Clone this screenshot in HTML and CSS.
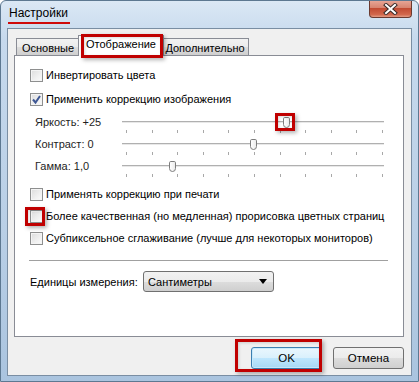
FILE: index.html
```html
<!DOCTYPE html>
<html lang="ru">
<head>
  <meta charset="UTF-8" />
  <title>Настройки</title>
  <link rel="stylesheet" href="styles.css">
</head>
<body>
  <div class="window">
    <!-- Title bar -->
    <div class="titlebar">
      <span class="title marked-title">Настройки</span>
      <span class="close">
        <svg width="17" height="12" viewBox="0 0 17 12">
          <path d="M4 2 L13 10 M13 2 L4 10" stroke="#3a2a28" stroke-width="4" stroke-linecap="square" fill="none"/>
          <path d="M4 2 L13 10 M13 2 L4 10" stroke="#ffffff" stroke-width="2" stroke-linecap="square" fill="none"/>
        </svg>
      </span>
    </div>

    <div class="client">
      <div class="tabs">
        <div class="tab tab-main">Основные</div>
        <div class="tab active marked-tab">Отображение</div>
        <div class="tab tab-extra">Дополнительно</div>
      </div>

      <div class="panel">
        <label class="check"><span class="box"></span>Инвертировать цвета</label>
        <label class="check">
          <span class="box">
            <svg width="11" height="11" viewBox="0 0 11 11">
              <path d="M2 5.5 L4.5 8.5 L9 2" stroke="#3f5894" stroke-width="2" fill="none"/>
            </svg>
          </span>Применить коррекцию изображения
        </label>

        <div class="slider-row">
          <span class="slider-label">Яркость: +25</span>
          <div class="slider">
            <div class="track"></div>
            <div class="ticks"></div>
            <span class="thumb marked-thumb" style="left: 161px"></span>
          </div>
        </div>
        <div class="slider-row">
          <span class="slider-label">Контраст: 0</span>
          <div class="slider">
            <div class="track"></div>
            <div class="ticks"></div>
            <span class="thumb" style="left: 128px"></span>
          </div>
        </div>
        <div class="slider-row">
          <span class="slider-label">Гамма: 1,0</span>
          <div class="slider">
            <div class="track"></div>
            <div class="ticks"></div>
            <span class="thumb" style="left: 47px"></span>
          </div>
        </div>

        <label class="check first-after"><span class="box"></span>Применять коррекцию при печати</label>
        <label class="check"><span class="box marked-box"></span>Более качественная (но медленная) прорисовка цветных страниц</label>
        <label class="check"><span class="box"></span>Субпиксельное сглаживание (лучше для некоторых мониторов)</label>

        <div class="separator"></div>

        <div class="units">
          <span class="units-label">Единицы измерения:</span>
          <div class="select">
            <span>Сантиметры</span>
            <svg width="8" height="5" viewBox="0 0 8 5"><path d="M0 0 H8 L4 5 Z" fill="#000"/></svg>
          </div>
        </div>
      </div>

      <div class="buttons">
        <button class="btn default marked-ok">OK</button>
        <button class="btn">Отмена</button>
      </div>
    </div>
  </div>
</body>
</html>
```

FILE: styles.css
```css
body {
  margin: 0;
  font-family: "Liberation Sans", Arial, sans-serif;
  font-size: 11px;
  color: #000;
}
.window {
  width: 419px;
  height: 382px;
  box-sizing: border-box;
  border: 1px solid #5d7891;
  border-radius: 6px 6px 0 0;
  background: linear-gradient(180deg, #dbe8f5 0%, #c6d9ed 10%, #b9cfe6 60%, #aac4df 100%);
  overflow: hidden;
}
.titlebar {
  height: 27px;
  display: flex;
  align-items: flex-start;
  padding-left: 8px;
}
.title {
  margin-top: 5px;
  font-size: 12px;
  line-height: 15px;
  color: #000;
}
.close {
  margin-left: auto;
  margin-right: 6px;
  margin-top: -1px;
  width: 43px;
  height: 18px;
  box-sizing: border-box;
  border: 1px solid #6b3a30;
  border-top: none;
  border-radius: 0 0 4px 4px;
  background: linear-gradient(180deg, #e9a99a 0%, #d88470 45%, #c24b33 50%, #d2674c 85%, #e39b84 100%);
  display: flex;
  align-items: center;
  justify-content: center;
}
.client {
  margin: 0 6px 0 6px;
  height: 348px;
  box-sizing: border-box;
  border: 1px solid #7a8ea3;
  background: #f0f0f0;
  padding: 6px 0 0 6px;
}
.tabs {
  display: flex;
  align-items: flex-end;
  height: 20px;
  margin-left: 2px;
  position: relative;
  z-index: 1;
}
.tab {
  height: 17px;
  box-sizing: border-box;
  padding-top: 2px;
  border: 1px solid #898c95;
  border-bottom: none;
  background: linear-gradient(180deg, #f2f2f2 0%, #ebebeb 50%, #dddddd 51%, #cfcfcf 100%);
  line-height: 14px;
  text-align: center;
  white-space: nowrap;
}
.tab + .tab {
  border-left: none;
}
.tab-main {
  width: 64px;
}
.tab-extra {
  width: 87px;
}
.tab.active {
  width: 86px;
  height: 21px;
  margin: 0 -2px -1px -2px;
  padding-top: 1px;
  background: #fff;
  border-left: 1px solid #898c95;
  position: relative;
  z-index: 2;
}
.tab.active + .tab {
  border-left: none;
}
.panel {
  width: 390px;
  height: 282px;
  box-sizing: border-box;
  border: 1px solid #898c95;
  background: #fff;
  padding: 7px 0 0 15px;
}
.check {
  display: flex;
  align-items: center;
  height: 24px;
  white-space: nowrap;
}
.box {
  flex-shrink: 0;
  width: 13px;
  height: 13px;
  box-sizing: border-box;
  border: 1px solid #8e8f8f;
  margin-right: 3px;
  background: linear-gradient(135deg, #dcdcdc 0%, #f0f0f0 60%, #fbfbfb 100%);
  box-shadow: inset 0 0 0 1px #f4f4f4;
  display: flex;
  align-items: center;
  justify-content: center;
  position: relative;
}
.box svg {
  display: block;
}
.slider-row {
  display: flex;
  height: 22px;
}
.slider-label {
  width: 87px;
  flex-shrink: 0;
  padding-left: 5px;
  line-height: 22px;
  color: #1e1e1e;
}
.slider {
  position: relative;
  width: 262px;
  padding-top: 10px;
}
.track {
  height: 1px;
  background: #b0b0b0;
  border-bottom: 1px solid #e8e8e8;
}
.ticks {
  margin: 7px 0 0 4px;
  width: 257px;
  height: 3px;
  background: repeating-linear-gradient(90deg, #a8a8a8 0 1px, transparent 1px 25.6px);
}
.thumb {
  position: absolute;
  top: 6px;
  width: 7px;
  height: 11px;
  box-sizing: border-box;
  border: 1px solid #7d7d7d;
  border-radius: 2px 2px 4px 4px;
  background: linear-gradient(90deg, #ffffff 0%, #ececec 100%);
}
.first-after {
  margin-top: 6px;
  height: 22px;
}
.first-after ~ .check {
  height: 22px;
}
.separator {
  margin: 11px 0 0 -1px;
  width: 359px;
  height: 1px;
  background: #a0a0a0;
}
.units {
  display: flex;
  align-items: center;
  margin-top: 10px;
}
.units-label {
  width: 113px;
  flex-shrink: 0;
  white-space: nowrap;
}
.select {
  width: 131px;
  height: 21px;
  box-sizing: border-box;
  border: 1px solid #707070;
  border-radius: 3px;
  background: linear-gradient(180deg, #f2f2f2 0%, #ebebeb 50%, #dddddd 51%, #cfcfcf 100%);
  display: flex;
  align-items: center;
  justify-content: space-between;
  padding: 0 6px 0 4px;
}
.buttons {
  display: flex;
  justify-content: flex-end;
  gap: 11px;
  width: 390px;
  margin-top: 10px;
}
.btn {
  width: 71px;
  height: 22px;
  border: 1px solid #707070;
  border-radius: 3px;
  background: linear-gradient(180deg, #f2f2f2 0%, #ebebeb 50%, #dddddd 51%, #cfcfcf 100%);
  font-family: inherit;
  font-size: 11.5px;
  color: #000;
  padding: 0;
  position: relative;
}
.btn.default {
  border-color: #3c7fb1;
  background: linear-gradient(180deg, #eaf6fd 0%, #d9f0fc 50%, #bee6fd 51%, #a7d9f5 100%);
  box-shadow: inset 0 0 0 1px #c7e9fb;
}

/* red annotation frames */
.marked-title {
  border-bottom: 2px solid #cf0a0a;
  padding: 0 2px 1px 1px;
  margin-left: -1px;
}
.marked-tab::after,
.marked-thumb::after,
.marked-box::after,
.marked-ok::after {
  content: "";
  position: absolute;
  border: 3px solid #c00000;
  box-shadow: 2px 2px 4px rgba(0, 0, 0, 0.3), inset 1px 1px 3px rgba(0, 0, 0, 0.15);
  pointer-events: none;
}
.marked-tab::after {
  left: 2px;
  right: 0;
  top: -2px;
  bottom: -2px;
}
.marked-thumb::after {
  left: -9px;
  right: -6px;
  top: -5px;
  bottom: -4px;
}
.marked-box::after {
  left: -6px;
  right: -3px;
  top: -4px;
  bottom: -4px;
}
.marked-ok::after {
  left: -17px;
  right: -1px;
  top: -9px;
  bottom: -4px;
}
```
